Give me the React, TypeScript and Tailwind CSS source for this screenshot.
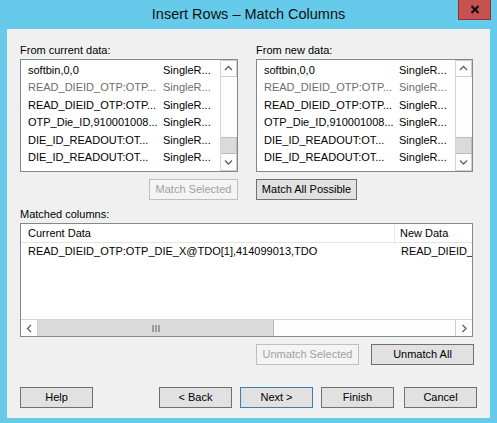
import React from "react";

const FONT = { fontFamily: '"Liberation Sans", Arial, sans-serif' };

type Row = { name: string; type: string; dim?: boolean };

const rows: Row[] = [
  { name: "softbin,0,0", type: "SingleR..." },
  { name: "READ_DIEID_OTP:OTP...", type: "SingleR...", dim: true },
  { name: "READ_DIEID_OTP:OTP...", type: "SingleR..." },
  { name: "OTP_Die_ID,910001008...", type: "SingleR..." },
  { name: "DIE_ID_READOUT:OT...", type: "SingleR..." },
  { name: "DIE_ID_READOUT:OT...", type: "SingleR..." },
];

function Chevron({ dir }: { dir: "up" | "down" | "left" | "right" }) {
  const d =
    dir === "up"
      ? "M1 5 L4.5 1.5 L8 5"
      : dir === "down"
      ? "M1 1.5 L4.5 5 L8 1.5"
      : dir === "left"
      ? "M5 1 L1.5 4.5 L5 8"
      : "M1.5 1 L5 4.5 L1.5 8";
  const w = dir === "up" || dir === "down" ? 9 : 7;
  const h = dir === "up" || dir === "down" ? 7 : 9;
  return (
    <svg width={w} height={h} viewBox={`0 0 ${w} ${h}`} fill="none">
      <path d={d} stroke="#606060" strokeWidth="1.3" />
    </svg>
  );
}

function VScroll() {
  return (
    <div className="w-[17px] h-full flex flex-col border-l border-[#d4d4d4] bg-[#fdfdfd]">
      <div className="h-[17px] flex items-center justify-center border border-[#cdcdcd] border-l-0">
        <Chevron dir="up" />
      </div>
      <div className="flex-1" />
      <div className="h-[17px] bg-[#dadada] border border-[#bdbdbd] border-l-0" />
      <div className="h-[17px] flex items-center justify-center border border-[#cdcdcd] border-l-0 border-t-0">
        <Chevron dir="down" />
      </div>
    </div>
  );
}

function ListBox({ width }: { width: string }) {
  return (
    <div className={`${width} h-[113px] bg-white border border-[#828790] flex`}>
      <div className="flex-1 pt-[1.5px] pl-[7px] overflow-hidden">
        {rows.map((r, i) => (
          <div
            key={i}
            className={`flex h-[17.5px] leading-[17.5px] text-[11px] whitespace-nowrap ${
              r.dim ? "text-[#6d6d6d]" : "text-black"
            }`}
          >
            <span className="w-[135px] shrink-0">{r.name}</span>
            <span>{r.type}</span>
          </div>
        ))}
      </div>
      <VScroll />
    </div>
  );
}

function Btn({
  children,
  width,
  kind = "normal",
}: {
  children: React.ReactNode;
  width: string;
  kind?: "normal" | "disabled" | "default";
}) {
  const cls =
    kind === "disabled"
      ? "bg-[#f4f4f4] border-[#bfbfbf] text-[#a0a0a0]"
      : kind === "default"
      ? "bg-[#e1e1e1] border-[#3c7fb1] text-black"
      : "bg-[#e1e1e1] border-[#707070] text-black";
  return (
    <div
      className={`${width} h-[21px] border ${cls} flex items-center justify-center text-[11px] whitespace-nowrap`}
    >
      {children}
    </div>
  );
}

export default function App() {
  return (
    <div className="w-[497px] h-[423px] bg-[#66caea] flex flex-col" style={FONT}>
      {/* title bar */}
      <div className="h-[29px] grid grid-cols-[1fr_auto_1fr]">
        <div />
        <div className="text-[14.5px] leading-[29px] text-[#111]">
          Insert Rows – Match Columns
        </div>
        <div className="flex justify-end pr-[6px]">
          <div className="w-[33px] h-[20px] bg-[#c75050] border border-[#8c3636] border-t-0 flex items-center justify-center">
            <svg width="10" height="9" viewBox="0 0 10 9">
              <path d="M1.5 1 L8.5 8 M8.5 1 L1.5 8" stroke="#111" strokeWidth="2.2" />
            </svg>
          </div>
        </div>
      </div>

      {/* client area */}
      <div className="mx-[7px] h-[389px] bg-[#f0f0f0] px-[13px] pt-[13px] text-black">
        <div className="flex gap-[18px]">
          <div className="w-[218px] flex flex-col">
            <div className="h-[17px] leading-[16px] text-[11px]">From current data:</div>
            <ListBox width="w-[218px]" />
            <div className="mt-[7px] flex justify-end">
              <Btn width="w-[89px]" kind="disabled">
                Match Selected
              </Btn>
            </div>
          </div>
          <div className="w-[217px] flex flex-col">
            <div className="h-[17px] leading-[16px] text-[11px]">From new data:</div>
            <ListBox width="w-[217px]" />
            <div className="mt-[7px] flex">
              <Btn width="w-[101px]">Match All Possible</Btn>
            </div>
          </div>
        </div>

        <div className="mt-[6px] h-[17px] leading-[17px] text-[11px]">Matched columns:</div>
        <div className="w-[453px] h-[114px] bg-white border border-[#828790] flex flex-col">
          <div className="h-[19px] flex text-[11px] leading-[18px] border-b border-[#e5e5e5] whitespace-nowrap overflow-hidden">
            <div className="w-[374px] shrink-0 pl-[7px] border-r border-[#e5e5e5]">Current Data</div>
            <div className="pl-[5px]">New Data</div>
          </div>
          <div className="flex-1 flex text-[11px] leading-[17px] whitespace-nowrap overflow-hidden">
            <div className="w-[374px] shrink-0 pl-[7px]">
              READ_DIEID_OTP:OTP_DIE_X@TDO[1],414099013,TDO
            </div>
            <div className="pl-[6px] w-[77px] overflow-hidden">READ_DIEID_</div>
          </div>
          <div className="h-[17px] flex bg-[#fdfdfd] border-t border-[#d4d4d4]">
            <div className="w-[17px] flex items-center justify-center border-r border-[#cdcdcd]">
              <Chevron dir="left" />
            </div>
            <div className="w-[236px] bg-[#dadada] border-r border-[#bdbdbd] flex items-center justify-center">
              <svg width="8" height="7" viewBox="0 0 8 7">
                <path d="M1 0 V7 M4 0 V7 M7 0 V7" stroke="#606060" strokeWidth="1" />
              </svg>
            </div>
            <div className="flex-1" />
            <div className="w-[17px] flex items-center justify-center border-l border-[#cdcdcd]">
              <Chevron dir="right" />
            </div>
          </div>
        </div>

        <div className="mt-[7px] flex justify-end gap-[12px] pr-[3px]">
          <Btn width="w-[103px]" kind="disabled">
            Unmatch Selected
          </Btn>
          <Btn width="w-[103px]">Unmatch All</Btn>
        </div>

        <div className="mt-[22px] flex">
          <Btn width="w-[73px]">Help</Btn>
          <div className="flex-1" />
          <div className="flex gap-[8px]">
            <Btn width="w-[73px]">&lt; Back</Btn>
            <Btn width="w-[73px]" kind="default">
              Next &gt;
            </Btn>
          </div>
          <div className="ml-[8px]">
            <Btn width="w-[73px]">Finish</Btn>
          </div>
          <div className="ml-[10px]">
            <Btn width="w-[73px]">Cancel</Btn>
          </div>
        </div>
      </div>
    </div>
  );
}
